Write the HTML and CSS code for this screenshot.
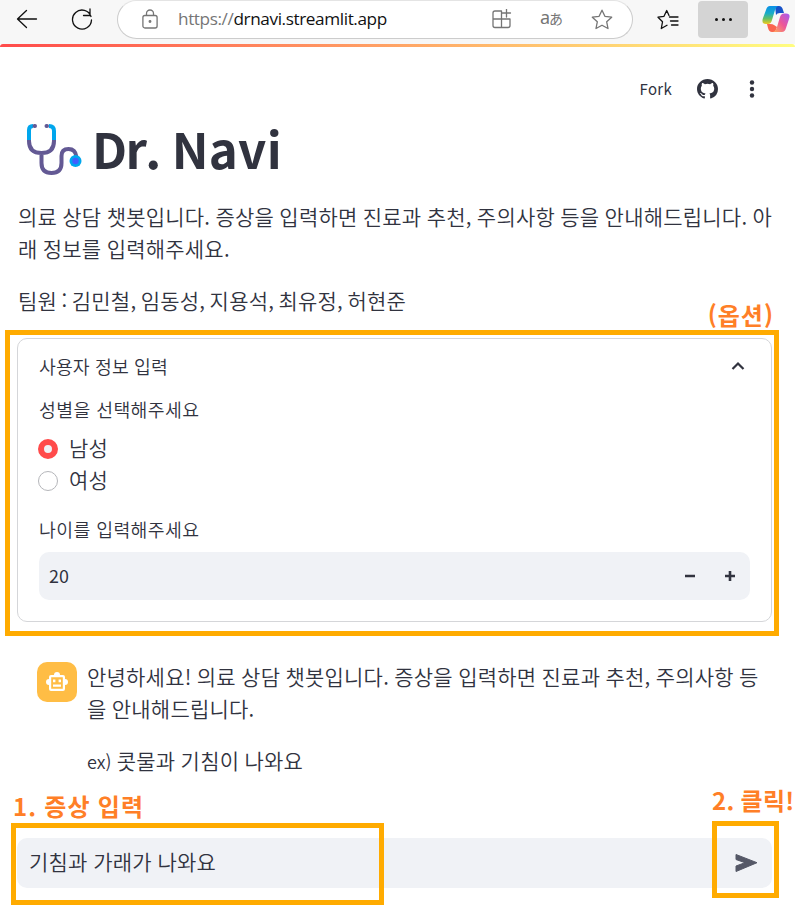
FILE: index.html
```html
<!DOCTYPE html>
<html lang="ko">
<head>
<meta charset="utf-8">
<title>Dr. Navi</title>
<link rel="stylesheet" href="styles.css">
</head>
<body>
<header class="browser">
  <svg class="nav back" width="22" height="20" viewBox="0 0 22 20"><path d="M20.500 10H2M10.500 1.500L1.500 10l9 8.500"/></svg>
  <svg class="nav reload" width="22" height="22" viewBox="0 0 22 22"><path d="M20 8.500A9.500 9.500 0 1 0 20.500 12M19 1v6.500h-6.500"/></svg>
  <div class="address">
    <svg class="lock" width="16" height="20" viewBox="0 0 16 20"><rect x=".9" y="6.500" width="14.200" height="12.500" rx="2"/><path d="M4.500 6V4.500a3.500 3.500 0 0 1 7 0V6"/><circle cx="8" cy="12.500" r=".8"/></svg>
    <span class="url"><span class="scheme">https://</span>drnavi.streamlit.app</span>
    <svg class="apps" width="20" height="20" viewBox="0 0 20 20"><path d="M9.500 2H3a2 2 0 0 0-2 2v12.500a2 2 0 0 0 2 2h13a2 2 0 0 0 2-2V10H1M9.500 2v16.500M14.500 0v8M10.500 4h8"/></svg>
    <span class="translate">a<small>あ</small></span>
    <svg class="star" width="22" height="21" viewBox="0 0 22 21"><path d="M11 1.200l2.900 6.100 6.800.9-5 4.600 1.300 6.700-6-3.300-6 3.300 1.300-6.700-5-4.600 6.800-.9z"/></svg>
  </div>
  <svg class="favorites" width="22" height="21" viewBox="0 0 22 21"><path d="M12.500 8H21M13.500 12H21M14.500 16H21M12 6.500L9.700 1.500 7 7.300l-6 .9 4.500 4.600L4.300 19.500l5.700-3.200"/></svg>
  <div class="more"><i></i><i></i><i></i></div>
  <svg class="copilot" width="28" height="28" viewBox="0 0 28 28">
    <defs>
      <linearGradient id="blue" x1="0" y1="0" x2="0" y2="1"><stop offset="0" stop-color="#0a8fe8"/><stop offset=".4" stop-color="#18acc8"/><stop offset=".7" stop-color="#65bf66"/><stop offset="1" stop-color="#f3c91c"/></linearGradient>
      <linearGradient id="pink" x1="1" y1="0" x2="0" y2="1"><stop offset="0" stop-color="#a45af3"/><stop offset=".5" stop-color="#ed5798"/><stop offset="1" stop-color="#ffac58"/></linearGradient>
    </defs>
    <path fill="#1752c8" d="M13 1h4q3 0 4 4l1 3h-4q-3 0-4 2z"/>
    <path fill="url(#blue)" d="M8 1h8q-2 1-3 4l-3 10q-1 4-4 4H4q-5 0-3-6l3-8q1-4 4-4z"/>
    <path fill="#fa6550" d="M10 27q-3 0-4-4l-1-4h3q3 0 4 1l3 2-2 5z"/>
    <path fill="url(#pink)" d="M20 27h-9q3-1 4-5l3-10q1-3.500 4-3.500h2q5 0 3 5.500l-3 9q-1 4-4 4z"/>
  </svg>
</header>
<div class="decoration"></div>
<main class="app">
  <nav class="actions">
    <span class="fork">Fork</span>
    <svg class="github" width="21" height="20" viewBox="0 0 16 16" preserveAspectRatio="none"><path d="M8 0C3.580 0 0 3.580 0 8c0 3.540 2.290 6.530 5.470 7.590.4.070.55-.17.55-.38 0-.19-.01-.82-.01-1.490-2.010.37-2.530-.49-2.690-.94-.09-.23-.48-.94-.82-1.130-.28-.15-.68-.52-.01-.53.63-.01 1.080.58 1.230.82.72 1.210 1.870.87 2.330.66.07-.52.28-.87.51-1.070-1.780-.2-3.640-.89-3.640-3.950 0-.87.31-1.590.82-2.150-.08-.2-.36-1.020.08-2.120 0 0 .67-.21 2.200.82a7.600 7.600 0 0 1 4 0c1.530-1.040 2.200-.82 2.200-.82.44 1.100.16 1.920.08 2.120.51.56.82 1.270.82 2.150 0 3.070-1.870 3.750-3.650 3.950.29.25.54.73.54 1.480 0 1.070-.01 1.930-.01 2.200 0 .21.15.46.55.38A8 8 0 0 0 16 8c0-4.420-3.580-8-8-8z"/></svg>
    <svg class="kebab" width="6" height="18" viewBox="0 0 6 18"><circle cx="3" cy="2.500" r="2.200"/><circle cx="3" cy="9" r="2.200"/><circle cx="3" cy="15.500" r="2.200"/></svg>
  </nav>
  <h1>
    <svg width="56" height="54" viewBox="0 0 56 54"><g fill="none" stroke-width="4"><path stroke="#00a6ed" d="M7 3Q3 3 3 7v11M23 3q5 0 5 5v10"/><path stroke="#635994" stroke-linecap="round" d="M8.500 3H9M20.500 3H21"/><path stroke="#635994" d="M3 17v1q0 12 12.500 12T28 18v-1M15.500 30v10q0 10 10 10t10-10v-7q0-7 7-7t8 8"/></g><circle cx="49.500" cy="38" r="6" fill="#00a6ed"/><circle cx="49.500" cy="38" r="3.200" fill="#3f5fff"/></svg>
    <span class="title"><span class="doctor">Dr.</span> Navi</span>
  </h1>
  <p class="intro">의료 상담 챗봇입니다. 증상을 입력하면 진료과 추천, 주의사항 등을 안내해드립니다. 아<br>래 정보를 입력해주세요.</p>
  <p class="team">팀원 : 김민철, 임동성, 지용석, 최유정, 허현준</p>
  <section class="expander">
    <div class="summary"><span>사용자 정보 입력</span><svg width="14" height="10" viewBox="0 0 14 10"><path d="M1.500 8L7 2.500 12.500 8"/></svg></div>
    <div class="label">성별을 선택해주세요</div>
    <div class="radio"><i class="dot checked"></i><span>남성</span></div>
    <div class="radio"><i class="dot"></i><span>여성</span></div>
    <div class="label age">나이를 입력해주세요</div>
    <div class="number"><span>20</span><svg width="52" height="12" viewBox="0 0 52 12"><path d="M1 6h10M41 6h10M46 1v10"/></svg></div>
    <div class="mark option"><b>(옵션)</b></div>
  </section>
  <section class="message">
    <div class="avatar"><svg width="24" height="22" viewBox="0 0 24 22"><path fill="#fff" fill-rule="evenodd" d="M9 4a3 3 0 0 1 6 0h3q2 0 2 2v2a3 3 0 0 1 0 6v4q0 2-2 2H6q-2 0-2-2v-4a3 3 0 0 1 0-6V6q0-2 2-2zM6.200 6.200v11.600h11.600V6.200z"/><path fill="#fff" d="M8 8.600h2.400v2.600H8zM13.600 8.600H16v2.600h-2.400zM8 13.500h8v2.200H8z"/></svg></div>
    <div class="speech">
      <p>안녕하세요! 의료 상담 챗봇입니다. 증상을 입력하면 진료과 추천, 주의사항 등<br>을 안내해드립니다.</p>
      <p class="example"><span class="latin">ex)</span> 콧물과 기침이 나와요</p>
    </div>
  </section>
  <section class="chat-input">
    <span>기침과 가래가 나와요</span>
    <svg width="24" height="20" viewBox="0 0 24 20"><path d="M2 1.500L23 9.700 2 18.500v-5.500l9-3.300L2 6.500z"/></svg>
    <div class="mark type"><b>1. 증상 입력</b></div>
    <div class="mark click"><b>2. 클릭!</b></div>
  </section>
</main>
</body>
</html>
```
FILE: styles.css
```css
* { box-sizing: border-box; }
body { margin: 0; width: 795px; height: 905px; overflow: hidden; background: #fff; color: #31333f; font-family: "Noto Sans CJK KR", sans-serif; }
p, h1 { margin: 0; }
svg { display: block; flex: none; }

.browser { height: 44px; display: flex; background: #f7f7f7; }
.browser svg { fill: none; stroke: #111; stroke-width: 1.300; stroke-linejoin: round; stroke-linecap: round; }
.browser .back { margin: 9px 0 0 16px; }
.browser .reload { margin: 8px 0 0 33px; }
.address { width: 516px; height: 39px; margin-left: 24px; border: 1px solid #ccc; border-top-color: #e4e4e4; border-radius: 20px; background: #fff; display: flex; }
.browser .address svg { stroke: #757575; }
.browser .lock { margin: 8px 0 0 24px; }
.url { margin-left: 20px; width: 314px; font: 17.200px/36px "Open Sans", sans-serif; letter-spacing: -.4px; color: #111; white-space: nowrap; }
.scheme { color: #767676; }
.browser .apps { margin-top: 8px; }
.translate { margin-left: 28px; width: 25px; font: 18px/32px "Noto Sans", sans-serif; letter-spacing: -1px; color: #757575; white-space: nowrap; }
.translate small { font: 14px/32px "Noto Sans CJK JP", sans-serif; }
.browser .address .star { margin: 8px 0 0 26px; }
.browser .favorites { margin: 9px 0 0 24px; }
.more { width: 50px; height: 37px; margin: 1px 0 0 19px; border-radius: 4px; background: #d4d4d4; display: flex; align-items: center; justify-content: center; gap: 4px; }
.more i { width: 3px; height: 3px; border-radius: 50%; background: #111; }
.browser .copilot { stroke: none; margin: 5px 0 0 14px; }
.decoration { height: 3px; border-radius: 3px 3px 0 0; background: linear-gradient(90deg, #ff4b4b, #fffd80); }

.app { padding: 0 23px 0 17px; }
.actions { height: 84px; display: flex; align-items: center; justify-content: flex-end; padding-right: 17px; fill: #31333f; }
.fork { margin-top: -2px; font-size: 15px; letter-spacing: .3px; }
.github { margin: 0 31px 0 25px; }
h1 { height: 62px; display: flex; margin-left: 9px; font-size: 49.200px; line-height: 62px; font-weight: 700; }
h1 svg { margin-top: -8px; }
.title { margin: -14px 0 0 10px; letter-spacing: .2px; word-spacing: -2px; }
.doctor { letter-spacing: -1.600px; }
.intro { margin-top: 7px; }
.intro, .team, .speech { font-size: 21px; line-height: 32px; letter-spacing: .220px; word-spacing: -.850px; font-weight: 350; white-space: nowrap; }
.intro { padding-left: 1px; }
.team { margin-top: 20px; padding-left: 1px; word-spacing: -1.700px; }

.expander { position: relative; width: 755px; height: 284px; margin-top: 22px; padding: 0 21px; border: 1px solid #d5d6d9; border-radius: 10px; font-weight: 350; }
.summary { height: 54px; display: flex; align-items: center; justify-content: space-between; padding-right: 5px; font-size: 18.300px; letter-spacing: .1px; }
.summary svg { fill: none; stroke: #31333f; stroke-width: 2.200; }
.label { height: 32px; font-size: 18.300px; line-height: 32px; letter-spacing: .400px; }
.radio { height: 32px; display: flex; align-items: center; gap: 11px; margin-left: -1px; font-size: 21px; letter-spacing: .2px; line-height: 32px; }
.radio span { margin-top: -4px; }
.label + .radio { margin-top: 8px; }
.dot { width: 20px; height: 20px; border: 1px solid #b5b6ba; border-radius: 50%; }
.checked { border: 6px solid #ff4b4b; background: #f0f2f6; }
.age { margin-top: 16px; }
.number { height: 48px; margin-top: 7px; padding: 0 14px 0 10px; border-radius: 10px; background: #f0f2f6; display: flex; align-items: center; justify-content: space-between; font-size: 17.900px; font-weight: 400; }
.number span { margin-top: -3px; }
.number svg { stroke: #31333f; stroke-width: 2.600; }

.message { display: flex; margin: 38px 0 0 20px; }
.avatar { width: 40px; height: 40px; border-radius: 10px; background: #ffbd45; display: flex; align-items: center; justify-content: center; margin-top: 2px; }
.speech { margin-left: 10px; }
.example { margin-top: 20px; }
.latin { font-size: 18px; letter-spacing: 0; font-weight: 350; }

.chat-input { position: relative; width: 755px; height: 50px; margin-top: 61px; padding: 0 14px 0 12px; border-radius: 10px; background: #f0f2f6; display: flex; align-items: center; justify-content: space-between; font-size: 21px; font-weight: 350; letter-spacing: .220px; word-spacing: -.5px; }
.chat-input > span { margin-top: -5px; }
.chat-input svg { fill: #555867; stroke: #555867; stroke-linejoin: round; }

.mark { position: absolute; border: 5px solid #ffab00; }
.mark b { position: absolute; white-space: nowrap; font-size: 24px; line-height: 30px; font-weight: 700; color: #ff7f27; letter-spacing: 1px; word-spacing: -1px; }
.option { left: -13px; top: -9px; width: 774px; height: 306px; }
.option b { right: 0; top: -35px; }
.type { left: -6px; top: -15px; width: 373px; height: 82px; }
.type b { left: -3px; top: -37px; letter-spacing: 1.200px; }
.click { left: 695px; top: -17px; width: 67px; height: 77px; }
.click b { left: -5px; top: -41px; letter-spacing: .3px; }
```
